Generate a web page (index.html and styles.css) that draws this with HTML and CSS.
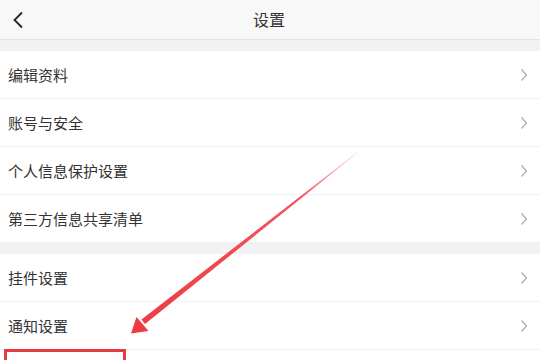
FILE: index.html
```html
<!DOCTYPE html>
<html lang="zh">
<head>
<meta charset="utf-8">
<title>设置</title>
<link rel="stylesheet" href="styles.css">
</head>
<body>
<div class="page">
  <header class="nav">
    <span class="back">
      <svg width="12" height="18" viewBox="0 0 12 18"><path d="M10 1.5 L2.5 9 L10 16.5" fill="none" stroke="#222" stroke-width="1.8"/></svg>
    </span>
    <h1 class="title">设置</h1>
    <span class="spacer"></span>
  </header>
  <section class="group">
    <div class="row"><span class="label">编辑资料</span><span class="chev"><svg width="8" height="14" viewBox="0 0 8 14"><path d="M1.5 1.5 L6.5 7 L1.5 12.5" fill="none" stroke="#ababab" stroke-width="1.2"/></svg></span></div>
    <div class="row"><span class="label">账号与安全</span><span class="chev"><svg width="8" height="14" viewBox="0 0 8 14"><path d="M1.5 1.5 L6.5 7 L1.5 12.5" fill="none" stroke="#ababab" stroke-width="1.2"/></svg></span></div>
    <div class="row"><span class="label">个人信息保护设置</span><span class="chev"><svg width="8" height="14" viewBox="0 0 8 14"><path d="M1.5 1.5 L6.5 7 L1.5 12.5" fill="none" stroke="#ababab" stroke-width="1.2"/></svg></span></div>
    <div class="row"><span class="label">第三方信息共享清单</span><span class="chev"><svg width="8" height="14" viewBox="0 0 8 14"><path d="M1.5 1.5 L6.5 7 L1.5 12.5" fill="none" stroke="#ababab" stroke-width="1.2"/></svg></span></div>
  </section>
  <section class="group">
    <div class="row"><span class="label">挂件设置</span><span class="chev"><svg width="8" height="14" viewBox="0 0 8 14"><path d="M1.5 1.5 L6.5 7 L1.5 12.5" fill="none" stroke="#ababab" stroke-width="1.2"/></svg></span></div>
    <div class="row"><span class="label">通知设置</span><span class="chev"><svg width="8" height="14" viewBox="0 0 8 14"><path d="M1.5 1.5 L6.5 7 L1.5 12.5" fill="none" stroke="#ababab" stroke-width="1.2"/></svg></span></div>
    <div class="row"></div>
  </section>
  <div class="highlight"></div>
  <svg class="arrow" width="540" height="360" viewBox="0 0 540 360">
    <defs>
      <linearGradient id="fade" x1="358" y1="152" x2="131" y2="333" gradientUnits="userSpaceOnUse">
        <stop offset="0" stop-color="#f04048" stop-opacity="0.1"/>
        <stop offset="0.25" stop-color="#ee3a42" stop-opacity="0.85"/>
        <stop offset="1" stop-color="#ee3a42"/>
      </linearGradient>
    </defs>
    <polygon points="358,151.5 358.4,152.3 145,324 141.5,319.5" fill="url(#fade)"/>
    <polygon points="131,333.5 136.5,317 148.5,331" fill="#ee3a42"/>
  </svg>
</div>
</body>
</html>
```
FILE: styles.css
```css
html, body {
  margin: 0;
  padding: 0;
  background: #f2f2f2;
}
.page {
  position: relative;
  width: 540px;
  height: 360px;
  overflow: hidden;
  font-family: "Noto Sans CJK SC", "Noto Sans", sans-serif;
  color: #333;
}
.nav {
  height: 39px;
  background: #f8f8f8;
  border-bottom: 1px solid #e3e3e3;
  display: flex;
  align-items: center;
  padding: 0 12px;
}
.back {
  width: 40px;
  display: flex;
  align-items: center;
}
.spacer {
  width: 40px;
}
.title {
  flex: 1;
  margin: 0;
  text-align: center;
  font-size: 16px;
  font-weight: normal;
  color: #333;
  line-height: 39px;
  padding-right: 2px;
}
.group {
  margin-top: 11px;
  background: #fff;
}
.row {
  height: 47px;
  display: flex;
  align-items: center;
  justify-content: space-between;
  padding: 0 12px 0 8px;
  border-bottom: 1px solid #f1f1f1;
}
.label {
  font-size: 15px;
  color: #333;
}
.chev {
  display: flex;
  align-items: center;
}
.highlight {
  position: absolute;
  left: 4px;
  top: 349px;
  width: 116px;
  height: 40px;
  border: 3px solid #e53a40;
}
.arrow {
  position: absolute;
  left: 0;
  top: 0;
}
```
